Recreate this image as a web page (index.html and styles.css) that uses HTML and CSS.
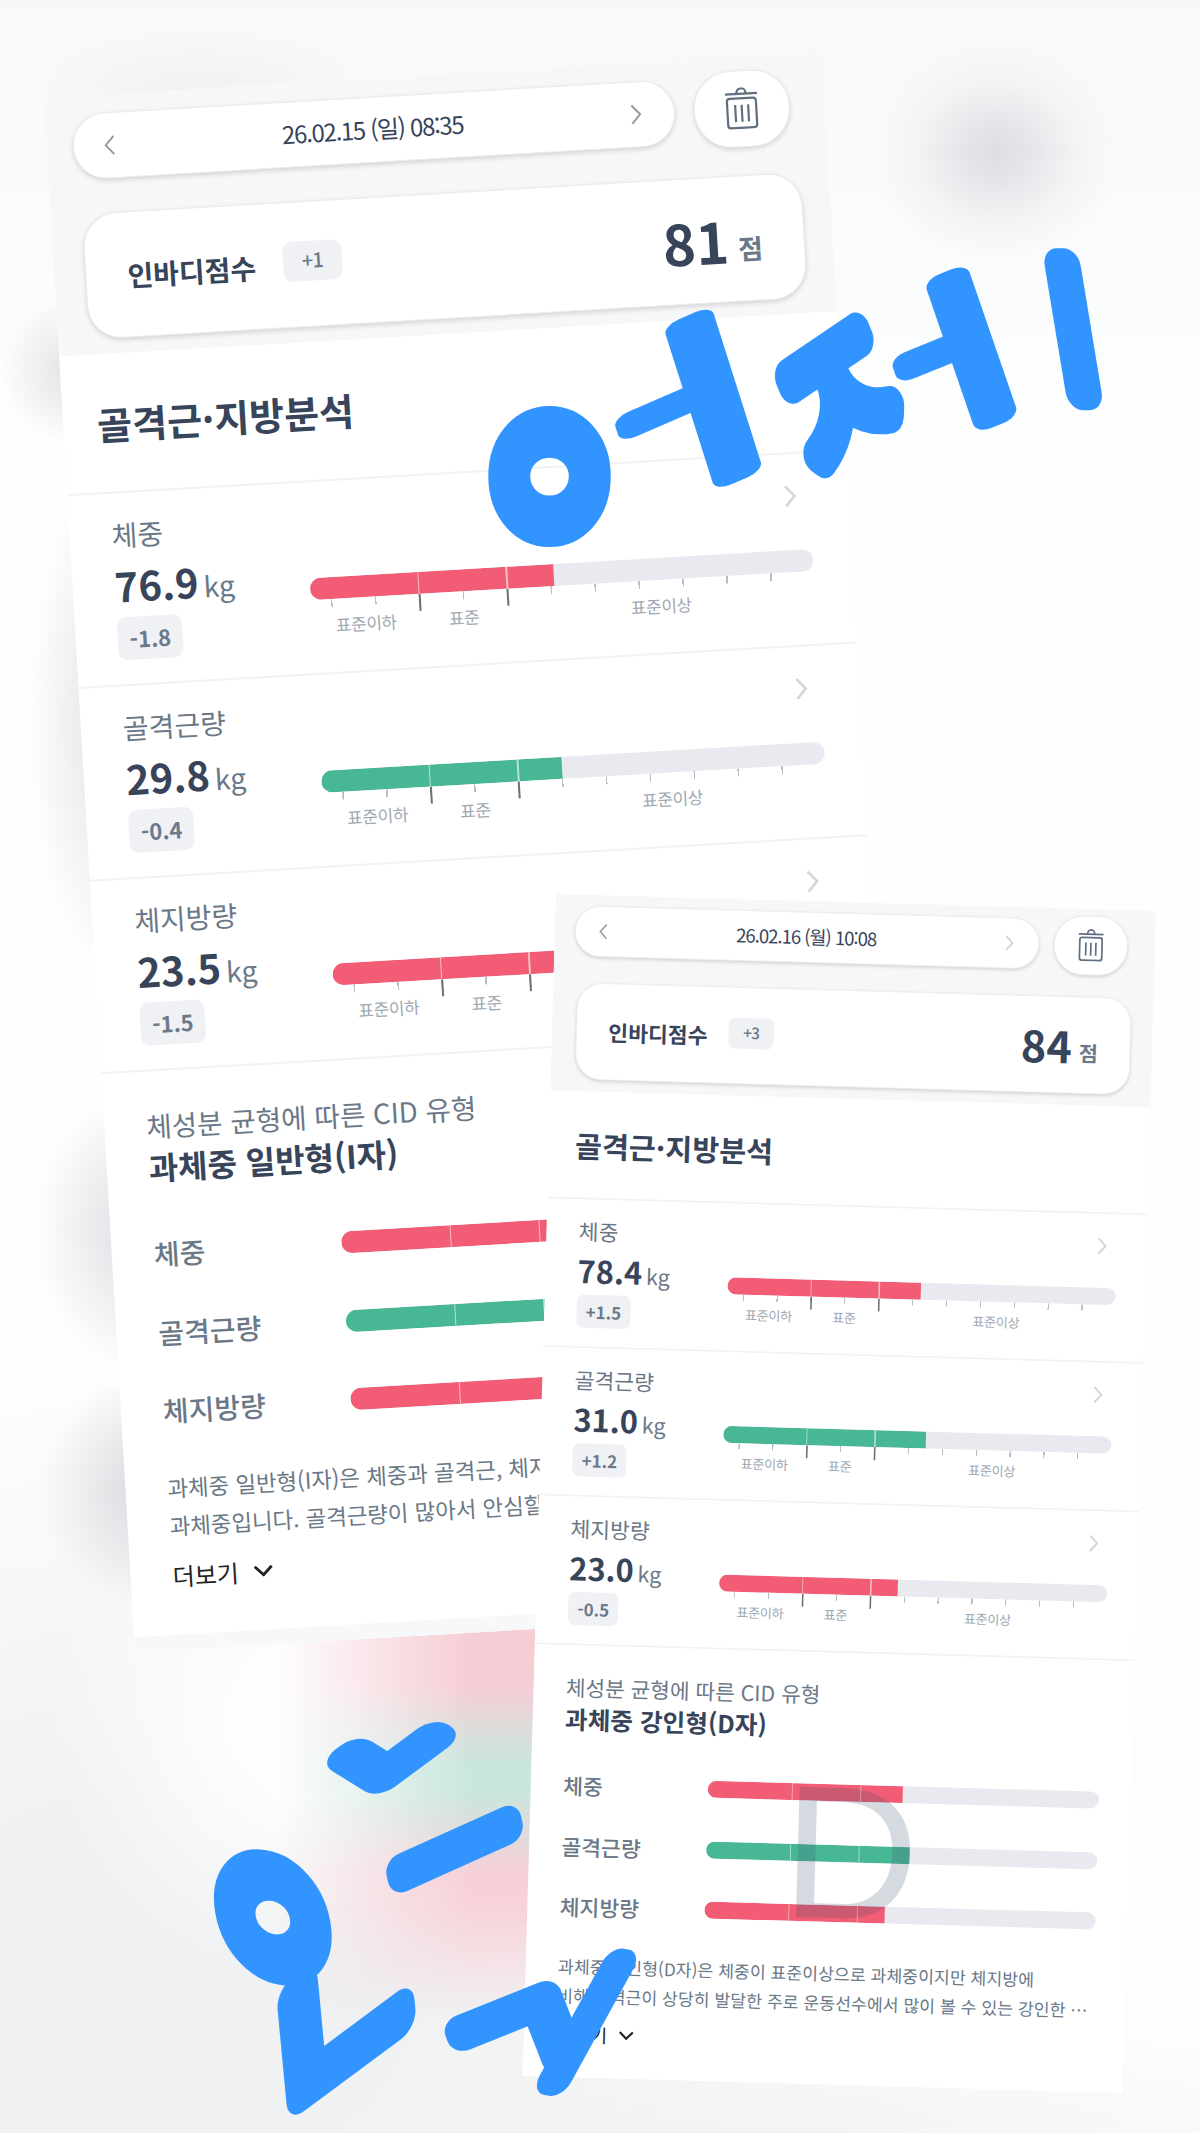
FILE: index.html
```html
<!doctype html>
<html lang="ko">
<head>
  <meta charset="UTF-8">
  <meta name="viewport" content="width=device-width, initial-scale=1.0">
  <title>인바디 비교</title>
  <link rel="stylesheet" href="styles.css">
</head>
<body>

<svg class="symbols" width="0" height="0" aria-hidden="true">
  <symbol id="left" viewBox="0 0 14 24"><path d="M12 2 3 12l9 10" /></symbol>
  <symbol id="right" viewBox="0 0 14 24"><path d="M2 2l9 10-9 10" /></symbol>
  <symbol id="down" viewBox="0 0 20 12"><path d="M1.5 1.5 10 10l8.500-8.500" /></symbol>
  <symbol id="trash" viewBox="0 0 34 42">
    <path d="M1 6.500h32M12.500 5.500a4.500 4.500 0 0 1 9 0" />
    <rect x="2.500" y="11" width="29" height="29.500" rx="3" />
    <path d="M10.500 17.500v17M17 17.500v17M23.500 17.500v17" />
  </symbol>
</svg>

<div class="board">
  <div class="glow"></div>

  <div class="sheet yesterday">
    <header class="top">
      <div class="nav">
        <div class="date">
          <svg class="arrow"><use href="#left" /></svg>
          <span>26.02.15 (일) 08:35</span>
          <svg class="arrow"><use href="#right" /></svg>
        </div>
        <div class="remove"><svg class="trash"><use href="#trash" /></svg></div>
      </div>
      <div class="score">
        <span class="score-name">인바디점수</span>
        <span class="diff">+1</span>
        <span class="point">81</span><span class="unit">점</span>
      </div>
    </header>

    <h2>골격근·지방분석</h2>

    <section class="row">
      <div class="info">
        <div class="label">체중</div>
        <div class="value">76.9<small>kg</small></div>
        <div class="diff">-1.8</div>
      </div>
      <div class="chart">
        <svg class="more"><use href="#right" /></svg>
        <div class="bar"><i class="fill red" style="width: 48.4%"></i></div>
        <div class="ticks"></div>
        <div class="zones"><span>표준이하</span><span>표준</span><span>표준이상</span></div>
      </div>
    </section>
    <section class="row">
      <div class="info">
        <div class="label">골격근량</div>
        <div class="value">29.8<small>kg</small></div>
        <div class="diff">-0.4</div>
      </div>
      <div class="chart">
        <svg class="more"><use href="#right" /></svg>
        <div class="bar"><i class="fill green" style="width: 47.9%"></i></div>
        <div class="ticks"></div>
        <div class="zones"><span>표준이하</span><span>표준</span><span>표준이상</span></div>
      </div>
    </section>
    <section class="row">
      <div class="info">
        <div class="label">체지방량</div>
        <div class="value">23.5<small>kg</small></div>
        <div class="diff">-1.5</div>
      </div>
      <div class="chart">
        <svg class="more"><use href="#right" /></svg>
        <div class="bar"><i class="fill red" style="width: 47%"></i></div>
        <div class="ticks"></div>
        <div class="zones"><span>표준이하</span><span>표준</span></div>
      </div>
    </section>

    <section class="cid">
      <p class="cid-sub">체성분 균형에 따른 CID 유형</p>
      <h3>과체중 일반형(I자)</h3>
      <div class="types">
        <div class="type"><span>체중</span><div class="bar"><i class="fill red" style="width: 48%"></i></div></div>
        <div class="type"><span>골격근량</span><div class="bar"><i class="fill green" style="width: 48%"></i></div></div>
        <div class="type"><span>체지방량</span><div class="bar"><i class="fill red" style="width: 47%"></i></div></div>
      </div>
      <p class="desc">과체중 일반형(I자)은 체중과 골격근, 체지<br>과체중입니다. 골격근량이 많아서 안심할</p>
      <div class="expand">더보기 <svg><use href="#down" /></svg></div>
    </section>
  </div>

  <div class="sheet today">
    <header class="top">
      <div class="nav">
        <div class="date">
          <svg class="arrow"><use href="#left" /></svg>
          <span>26.02.16 (월) 10:08</span>
          <svg class="arrow off"><use href="#right" /></svg>
        </div>
        <div class="remove"><svg class="trash"><use href="#trash" /></svg></div>
      </div>
      <div class="score">
        <span class="score-name">인바디점수</span>
        <span class="diff">+3</span>
        <span class="point">84</span><span class="unit">점</span>
      </div>
    </header>

    <h2>골격근·지방분석</h2>

    <section class="row">
      <div class="info">
        <div class="label">체중</div>
        <div class="value">78.4<small>kg</small></div>
        <div class="diff">+1.5</div>
      </div>
      <div class="chart">
        <svg class="more"><use href="#right" /></svg>
        <div class="bar"><i class="fill red" style="width: 49.8%"></i></div>
        <div class="ticks"></div>
        <div class="zones"><span>표준이하</span><span>표준</span><span>표준이상</span></div>
      </div>
    </section>
    <section class="row">
      <div class="info">
        <div class="label">골격근량</div>
        <div class="value">31.0<small>kg</small></div>
        <div class="diff">+1.2</div>
      </div>
      <div class="chart">
        <svg class="more"><use href="#right" /></svg>
        <div class="bar"><i class="fill green" style="width: 52.1%"></i></div>
        <div class="ticks"></div>
        <div class="zones"><span>표준이하</span><span>표준</span><span>표준이상</span></div>
      </div>
    </section>
    <section class="row">
      <div class="info">
        <div class="label">체지방량</div>
        <div class="value">23.0<small>kg</small></div>
        <div class="diff">-0.5</div>
      </div>
      <div class="chart">
        <svg class="more"><use href="#right" /></svg>
        <div class="bar"><i class="fill red" style="width: 46%"></i></div>
        <div class="ticks"></div>
        <div class="zones"><span>표준이하</span><span>표준</span><span>표준이상</span></div>
      </div>
    </section>

    <section class="cid">
      <p class="cid-sub">체성분 균형에 따른 CID 유형</p>
      <h3>과체중 강인형(D자)</h3>
      <div class="types">
        <div class="type"><span>체중</span><div class="bar"><i class="fill red" style="width: 49.9%"></i></div></div>
        <div class="type"><span>골격근량</span><div class="bar"><i class="fill green" style="width: 52%"></i></div></div>
        <div class="type"><span>체지방량</span><div class="bar"><i class="fill red" style="width: 46%"></i></div></div>
        <span class="shape">D</span>
      </div>
      <p class="desc">과체중 강인형(D자)은 체중이 표준이상으로 과체중이지만 체지방에<br>비해 골격근이 상당히 발달한 주로 운동선수에서 많이 볼 수 있는 강인한 ⋯</p>
      <div class="expand">더보기 <svg><use href="#down" /></svg></div>
    </section>
  </div>

  <!-- marker notes, one letter per matrix -->
  <svg class="marker" viewBox="0 0 1200 2133">
    <g aria-label="어제">
      <text class="thick" transform="matrix(1.62 0 0 2.05 475 553)">ㅇ</text>
      <text class="thin" transform="matrix(3.15 -1.36 .54 1.7 560 535)">ㅓ</text>
      <text transform="matrix(1.25 -.85 .72 1.75 808 501)">ㅈ</text>
      <text class="thin" transform="matrix(2.4 -.97 .53 1.54 859 458)">ㅓ</text>
      <text transform="matrix(1.2 0 .24 1.45 1026 382)">ㅣ</text>
    </g>
    <g aria-label="오늘">
      <text class="thick" transform="matrix(1.5 .1 .35 1.95 217 1986)">ㅇ</text>
      <text class="thick" transform="matrix(1.75 -1.3 .2 2.1 271 2148)">ㄴ</text>
      <text class="thick" transform="matrix(.93 -.69 .72 .45 374 1798)">ㄴ</text>
      <text transform="matrix(1.29 -.58 .3 1.3 407 1926)">ㅡ</text>
      <text transform="matrix(1.5 -.6 .5 1.28 464 2117)">ㄱ</text>
      <text transform="matrix(1 .2 -.71 1.29 514 2060)">ㅣ</text>
    </g>
  </svg>
</div>

</body>
</html>
```
FILE: styles.css
```css
* {
  box-sizing: border-box;
}

body {
  margin: 0;
  font-family: "Noto Sans CJK KR", "Noto Sans", sans-serif;
  color: #38445a;
}

h2, h3, p {
  margin: 0;
}

svg {
  display: block;
  fill: none;
  stroke: currentColor;
  stroke-width: 2.2;
}

.symbols {
  position: absolute;
}

.board {
  position: relative;
  width: 1200px;
  height: 2133px;
  overflow: hidden;
  background:
    radial-gradient(ellipse 125px 110px at 996px 152px, #dddee2, #e6e7ea 30%, #f3f4f5 65%, transparent),
    radial-gradient(ellipse 170px 60px at 200px 90px, #f0f1f2, transparent),
    radial-gradient(ellipse 80px 75px at 80px 370px, #dfe0e2, transparent),
    radial-gradient(ellipse 80px 250px at 110px 720px, #e0e2e5, transparent),
    radial-gradient(ellipse 110px 140px at 145px 1230px, #dadce0, transparent),
    radial-gradient(ellipse 120px 120px at 160px 1490px, #d4d6da, transparent),
    radial-gradient(ellipse 260px 260px at 310px 1720px, #fdfdfd 30%, transparent),
    radial-gradient(ellipse 800px 600px at 160px 1980px, #eff1f2 30%, transparent),
    radial-gradient(ellipse 700px 110px at 800px 2133px, #f2f4f5, transparent),
    linear-gradient(#f7f8fa, #fafbfc 240px, #fdfefe 420px, #fdfdfd);
}

/* colour bleeding out from behind the two sheets */
.glow {
  position: absolute;
  left: 260px;
  top: 1600px;
  width: 280px;
  height: 430px;
  background: linear-gradient(#f6cdd5 85px, #c9e7dd 165px, #c9e7dd 190px, #f7cfd7 275px, #f7d3da 310px, transparent 420px);
  -webkit-mask-image: linear-gradient(90deg, transparent 20px, #000 210px);
  mask-image: linear-gradient(90deg, transparent 20px, #000 210px);
}

/* sheets */

.sheet {
  position: absolute;
  width: 779px;
  background: #fff;
  transform-origin: 0 0;
}

.yesterday {
  left: 44.2px;
  top: 98px;
  height: 1557px;
  border-bottom: 15px solid #f6f8f9;
  transform: rotate(-3.35deg);
}

.today {
  left: 556.2px;
  top: 894px;
  height: 1535px;
  transform: rotate(1.62deg) scale(.7703);
}

.top {
  height: 259px;
  padding: 12.5px 28px 0 25.5px;
  background: #f6f7f9;
}

.today .top {
  height: 255px;
  padding-top: 8.5px;
}

.nav {
  display: flex;
  align-items: center;
  gap: 19px;
}

.date, .remove, .score {
  display: flex;
  align-items: center;
  background: #fff;
  border: 1px solid #ececee;
  box-shadow: 0 2px 5px rgba(0, 0, 0, .15);
}

.date {
  justify-content: space-between;
  width: 603.5px;
  height: 66px;
  padding: 0 31px 0 29px;
  border-radius: 33px;
  font-size: 24px;
  letter-spacing: -1.3px;
}

.date span {
  margin-top: -4px;
}

.arrow {
  width: 13px;
  height: 22px;
  color: #999b9e;
}

.arrow.off {
  color: #cdd0d4;
}

.remove {
  justify-content: center;
  width: 96px;
  height: 77px;
  border-radius: 38px;
}

.trash {
  width: 34px;
  height: 42px;
  color: #5f6f81;
}

.score {
  width: 720px;
  height: 126px;
  margin: 28px 0 0 5.5px;
  padding: 0 41px;
  border-radius: 34px;
}

.score-name {
  font-size: 28px;
  font-weight: 700;
}

.diff {
  display: flex;
  align-items: center;
  justify-content: center;
  width: fit-content;
  height: 43px;
  margin-top: -3px;
  padding: 0 12px 2px;
  border-radius: 9px;
  background: #eff1f5;
  color: #6b798a;
  font-size: 22px;
  font-weight: 700;
}

.score .diff {
  width: 59px;
  height: 40px;
  margin: -5px 0 0 27px;
  padding: 0 0 4px;
  font-size: 20px;
  font-weight: 500;
  letter-spacing: -1px;
}

.point {
  margin-left: auto;
  font-size: 56px;
  font-weight: 700;
}

.unit {
  margin: 20px 0 0 9px;
  color: #6a7989;
  font-size: 27px;
  font-weight: 700;
}

h2 {
  height: 140px;
  padding-left: 34px;
  border-bottom: 2px solid #f1f2f4;
  font-size: 38px;
  line-height: 140px;
}

.row {
  display: flex;
  height: 193px;
  padding-left: 42px;
  border-bottom: 2px solid #f1f2f4;
}

.info {
  width: 195px;
  padding-top: 20px;
}

.label {
  color: #6a7887;
  font-size: 28px;
  line-height: 42px;
}

.value {
  font-size: 40px;
  font-weight: 700;
  line-height: 60px;
}

.value small {
  margin-left: 5px;
  color: #6a7887;
  font-size: 28px;
  font-weight: 400;
}

.chart {
  width: 504px;
  padding-top: 30px;
}

.more {
  width: 14px;
  height: 24px;
  margin: 0 12px 42px auto;
  color: #d3d6da;
  stroke-width: 2.6;
}

.bar {
  position: relative;
  width: 504px;
  height: 22px;
  border-radius: 11px;
  background: #e8eaf0;
  overflow: hidden;
}

/* white separators at both ends of the normal range */
.bar::before,
.bar::after {
  content: "";
  position: absolute;
  top: 0;
  left: 21.4%;
  width: 1.500px;
  height: 100%;
  background: rgba(255, 255, 255, .6);
}

.bar::after {
  left: 38.9%;
}

.fill {
  display: block;
  height: 100%;
}

.red {
  background: #f25c74;
}

.green {
  background: #48b796;
}

.ticks {
  height: 17px;
  background:
    linear-gradient(#6d6f73, #6d6f73) 107.5px 0 / 2px 17px no-repeat,
    linear-gradient(#6d6f73, #6d6f73) 195.5px 0 / 2px 17px no-repeat,
    repeating-linear-gradient(90deg, #b9bcc1 0 1.500px, transparent 1.500px 44px) 20px 0 / 442px 8px no-repeat;
}

.zones {
  display: grid;
  grid-template-columns: 108px 88px 307px;
  margin-top: -2px;
  color: #a0a9b2;
  font-size: 17px;
  line-height: 22px;
  letter-spacing: -.4px;
  text-align: center;
}

.cid {
  padding: 33px 0 0 42px;
}

.cid-sub {
  color: #6a7887;
  font-size: 27.7px;
  line-height: 42px;
}

h3 {
  font-size: 32px;
  line-height: 40px;
}

.types {
  position: relative;
  margin-top: 28px;
}

.type {
  display: flex;
  align-items: center;
  height: 78.4px;
  color: #6a7887;
  font-size: 28px;
  font-weight: 500;
}

.type span {
  width: 188px;
}

.type .bar {
  width: 508px;
}

.shape {
  position: absolute;
  top: 50%;
  left: 287px;
  color: rgba(60, 85, 110, .22);
  font: 246px/1 "Liberation Sans", sans-serif;
  transform: translateY(-50.5%);
}

.desc {
  margin-top: 19px;
  color: #6a7887;
  font-size: 22.4px;
  line-height: 38px;
  white-space: nowrap;
}

.expand {
  display: flex;
  align-items: center;
  gap: 15px;
  margin-top: 14px;
  color: #222;
  font-size: 24px;
}

.expand svg {
  width: 20px;
  height: 12px;
  stroke-width: 2.8;
}

/* marker */

.marker {
  position: absolute;
  inset: 0;
  width: 1200px;
  height: 2133px;
}

.marker text {
  fill: #3295ff;
  stroke: #3295ff;
  stroke-width: 33px;
  stroke-linecap: round;
  stroke-linejoin: round;
  vector-effect: non-scaling-stroke;
  font-size: 100px;
  font-weight: 300;
}

.marker .thin {
  stroke-width: 27px;
}

.marker .thick {
  stroke-width: 38px;
}
```
